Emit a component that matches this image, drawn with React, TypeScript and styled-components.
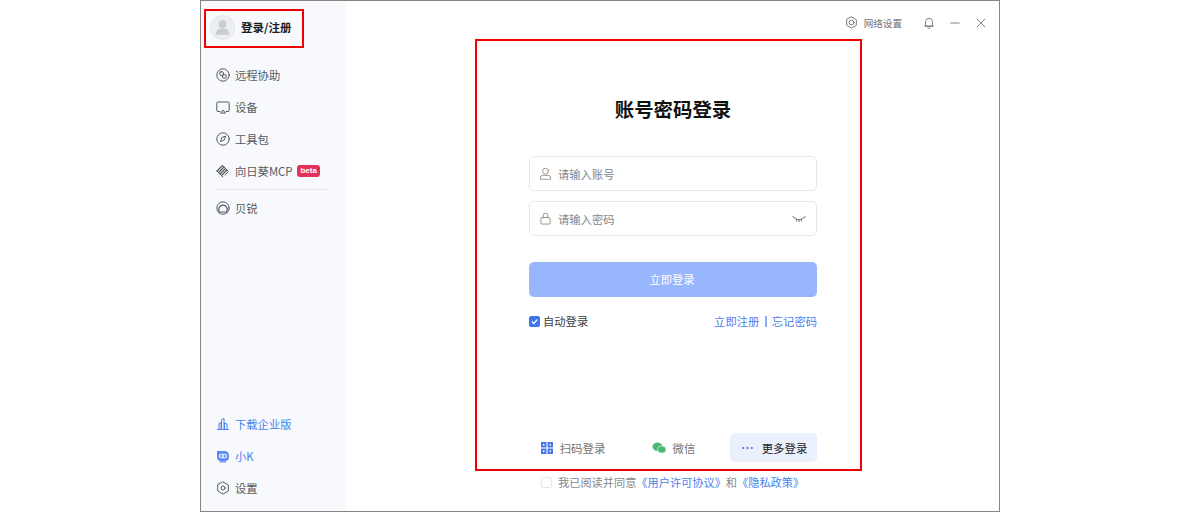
import React, { ReactNode } from 'react';
import styled, { createGlobalStyle } from 'styled-components';

const BLUE = '#3f74f0';
const LINK = '#4a7ff0';
const GREY = '#55595f';

const GlobalStyle = createGlobalStyle`
  html, body {
    margin: 0;
    padding: 0;
    background: #fff;
    font-family: "Noto Sans CJK SC", "Liberation Sans", sans-serif;
  }
`;

const Page = styled.div`
  position: relative;
  display: flex;
  justify-content: center;
  width: 1200px;
  height: 512px;
  overflow: hidden;
`;

const Window = styled.div`
  display: flex;
  box-sizing: border-box;
  width: 800px;
  height: 512px;
  border: 1px solid #858585;
  background: #fff;
`;

const Sidebar = styled.aside`
  display: flex;
  flex-direction: column;
  flex: 0 0 144px;
  background: #f7f9fc;
  padding-top: 12px;
`;

const Profile = styled.div`
  display: flex;
  align-items: center;
  gap: 6px;
  height: 28px;
  padding-left: 9px;
  margin-bottom: 18px;
  color: #1c1c1c;
  font-size: 11.5px;
  font-weight: 700;
`;

const Avatar = styled.div`
  flex: 0 0 25px;
  width: 25px;
  height: 25px;
`;

const NavList = styled.nav`
  display: flex;
  flex-direction: column;
`;

const NavItem = styled.div<{ $blue?: boolean }>`
  display: flex;
  align-items: center;
  height: 32px;
  padding-left: 15px;
  gap: 5px;
  font-size: 11.3px;
  color: ${({ $blue }) => ($blue ? LINK : GREY)};

  svg {
    flex: 0 0 14px;
  }
`;

const Badge = styled.span`
  margin-left: 0;
  padding: 0 3px;
  height: 12px;
  line-height: 12px;
  border-radius: 3px;
  background: #e0325a;
  color: #fff;
  font-family: "Liberation Sans", sans-serif;
  font-size: 8px;
  font-weight: 700;
`;

const Divider = styled.div`
  height: 1px;
  margin: 2px 17px 2px 15px;
  background: #e6e8ec;
`;

const Spacer = styled.div`
  flex: 1;
`;

const BottomNav = styled(NavList)`
  padding-bottom: 7px;
`;

const Main = styled.main`
  display: flex;
  flex-direction: column;
  align-items: center;
  flex: 1;
  min-width: 0;
  padding-left: 2px;
`;

const TopBar = styled.header`
  display: flex;
  align-items: center;
  justify-content: flex-end;
  align-self: stretch;
  height: 43px;
  padding-right: 12px;
  color: #6d7075;
  font-size: 9.6px;
`;

const NetSetting = styled.div`
  display: flex;
  align-items: center;
  gap: 6px;
  margin-right: 7px;
`;

const WinButton = styled.button`
  display: flex;
  align-items: center;
  justify-content: center;
  width: 12px;
  height: 12px;
  margin-left: 14px;
  padding: 0;
  border: 0;
  background: none;
`;

const Panel = styled.section`
  display: flex;
  flex-direction: column;
  width: 288px;
  flex: 1;
`;

const Title = styled.h1`
  margin: 51px 0 33px;
  height: 28px;
  line-height: 28px;
  text-align: center;
  color: #111;
  font-size: 19.4px;
  font-weight: 700;
`;

const Field = styled.div`
  display: flex;
  align-items: center;
  box-sizing: border-box;
  height: 35px;
  margin-bottom: 10px;
  padding: 0 10px 0 9px;
  gap: 6px;
  border: 1px solid #e8e9ed;
  border-radius: 5px;
  color: #85888d;
  font-size: 11.3px;
`;

const FieldText = styled.span`
  flex: 1;
`;

const Submit = styled.button`
  height: 35px;
  margin-top: 16px;
  padding: 0 2px 2px 0;
  border: 0;
  border-radius: 5px;
  background: #98b6fb;
  color: #fff;
  font-family: inherit;
  font-size: 11.3px;
`;

const Options = styled.div`
  display: flex;
  align-items: center;
  justify-content: space-between;
  height: 20px;
  margin-top: 14px;
  font-size: 11.3px;
`;

const AutoLogin = styled.label`
  display: flex;
  align-items: center;
  gap: 3px;
  color: #3a3c40;
`;

const CheckBox = styled.span<{ $checked?: boolean }>`
  display: flex;
  align-items: center;
  justify-content: center;
  box-sizing: border-box;
  width: 11px;
  height: 11px;
  border-radius: 2px;
  background: ${({ $checked }) => ($checked ? BLUE : '#fff')};
  border: 1px solid ${({ $checked }) => ($checked ? BLUE : '#e6e7eb')};
`;

const Links = styled.div`
  display: flex;
  align-items: center;
  color: ${LINK};
`;

const Sep = styled.span`
  width: 1.5px;
  height: 11px;
  margin: 0 5px 0 6px;
  background: #8aaaf5;
`;

const Methods = styled.div`
  display: flex;
  align-items: center;
  height: 29px;
  margin-top: auto;
  font-size: 11.4px;
  color: #6f7276;
`;

const Method = styled.div<{ $active?: boolean; $width: number }>`
  display: flex;
  align-items: center;
  justify-content: center;
  gap: ${({ $active }) => ($active ? 9 : 7)}px;
  box-sizing: border-box;
  width: ${({ $width }) => $width}px;
  height: 29px;
  padding-left: ${({ $active }) => ($active ? 2 : 0)}px;
  border-radius: 5px;
  background: ${({ $active }) => ($active ? '#ebf0fd' : 'transparent')};
  color: ${({ $active }) => ($active ? '#222' : 'inherit')};
`;

const Agreement = styled.div`
  display: flex;
  align-items: center;
  gap: 6px;
  height: 22px;
  margin: 9px 0 18px;
  padding-left: 12px;
  color: #85888d;
  font-size: 11.2px;
  white-space: nowrap;
`;

const AgreementLink = styled.span`
  color: ${LINK};
`;

const Highlight = styled.div<{ $x: number; $y: number; $w: number; $h: number }>`
  position: absolute;
  box-sizing: border-box;
  left: ${({ $x }) => $x}px;
  top: ${({ $y }) => $y}px;
  width: ${({ $w }) => $w}px;
  height: ${({ $h }) => $h}px;
  border: 2px solid #f00000;
  pointer-events: none;
`;

const Icon = ({ children, size = 14, color = 'currentColor', box = 14 }: { children: ReactNode; size?: number; color?: string; box?: number }) => (
  <svg width={size} height={size} viewBox={`0 0 ${box} ${box}`} fill="none" stroke={color} strokeWidth="1" strokeLinecap="round" strokeLinejoin="round">
    {children}
  </svg>
);

const navTop = [
  {
    label: '远程协助',
    icon: (
      <>
        <circle cx="7" cy="7" r="6.2" />
        <rect x="3.800" y="3.800" width="3.600" height="3.600" rx="1" />
        <rect x="6.600" y="6.600" width="3.600" height="3.600" rx="1" />
      </>
    ),
  },
  {
    label: '设备',
    icon: (
      <>
        <path d="M3.800 11.500H2a1.200 1.200 0 0 1-1.200-1.200V3.200A1.200 1.200 0 0 1 2 2h10a1.200 1.200 0 0 1 1.200 1.200v7.100a1.200 1.200 0 0 1-1.200 1.200h-1.800" />
        <path d="M4.800 12.800 7 10l2.200 2.800z" />
      </>
    ),
  },
  {
    label: '工具包',
    icon: (
      <>
        <circle cx="7" cy="7" r="6.2" />
        <path d="M9.600 4.400 8.200 8.200 4.400 9.600l1.400-3.800z" />
      </>
    ),
  },
];

export default function App() {
  return (
    <Page>
      <GlobalStyle />
      <Window>
        <Sidebar>
          <Profile>
            <Avatar>
              <svg width="25" height="25" viewBox="0 0 26 26">
                <circle cx="13" cy="13" r="12.500" fill="#eceef1" stroke="#e3e5e9" />
                <circle cx="13" cy="9.500" r="4" fill="#c9ccd2" />
                <path d="M6 19.500c0-4 3-5.500 7-5.500s7 1.500 7 5.500c0 .8-.6 1-1.200 1H7.200C6.600 20.500 6 20.300 6 19.500z" fill="#c9ccd2" />
              </svg>
            </Avatar>
            登录/注册
          </Profile>
          <NavList>
            {navTop.map((item) => (
              <NavItem key={item.label}>
                <Icon>{item.icon}</Icon>
                {item.label}
              </NavItem>
            ))}
            <NavItem>
              <Icon>
                <path d="M1 7 6.500 1.500M2.500 8.500 8 3M4 10l5.500-5.500M5.500 11.500 11 6" strokeWidth="1.200" />
                <path d="M6.500 1.500 12.500 7.500 9 11M1 7l6 6" />
              </Icon>
              向日葵MCP
              <Badge>beta</Badge>
            </NavItem>
            <Divider />
            <NavItem>
              <Icon>
                <circle cx="7" cy="7" r="6.200" />
                <path d="M3.200 10.500a4.300 4.300 0 1 1 7.600 0" strokeWidth="1.300" />
                <path d="M3 11.500c1.500-.9 6.500-.9 8 0" />
              </Icon>
              贝锐
            </NavItem>
          </NavList>
          <Spacer />
          <BottomNav>
            <NavItem $blue>
              <Icon>
                <path d="M1.500 12.500h11M3 12.500V6.500l2-.8v6.800M5.500 12.500V2.500L8 1.500v11M8.500 12.500V6l2.500 1v5.500" />
              </Icon>
              下载企业版
            </NavItem>
            <NavItem $blue>
              <svg width="14" height="14" viewBox="0 0 14 14">
                <path d="M1.500 2h7A4.500 4.500 0 0 1 13 6.500v1.500A4 4 0 0 1 9 12H5a4 4 0 0 1-4-4V2.500a.5.5 0 0 1 .5-.5z" fill="#5b8bf3" />
                <rect x="2.800" y="4.800" width="8.400" height="4.400" rx="2.200" fill="#dfe9fe" />
                <circle cx="5.300" cy="7" r=".9" fill="#3f74f0" />
                <circle cx="8.700" cy="7" r=".9" fill="#3f74f0" />
                <path d="M4 12.800h5.500" stroke="#5b8bf3" strokeWidth="1.200" strokeLinecap="round" />
              </svg>
              小K
            </NavItem>
            <NavItem>
              <Icon>
                <path d="M7 .9 12.300 4v6L7 13.100 1.700 10V4z" />
                <circle cx="7" cy="7" r="2" />
              </Icon>
              设置
            </NavItem>
          </BottomNav>
        </Sidebar>
        <Main>
          <TopBar>
            <NetSetting>
              <Icon size={13} color="#6d7075">
                <path d="M7 1 12.200 4v6L7 13 1.800 10V4z" />
                <circle cx="7" cy="7" r="2.600" />
              </Icon>
              网络设置
            </NetSetting>
            <WinButton>
              <Icon size={12} color="#6d7075">
                <path d="M3 10.500V5.500a4 4 0 0 1 8 0v5zM1.800 10.500h10.400M5.800 13h2.400" />
              </Icon>
            </WinButton>
            <WinButton>
              <Icon size={12} color="#6d7075"><path d="M2 7h10" /></Icon>
            </WinButton>
            <WinButton>
              <Icon size={12} color="#6d7075"><path d="m2.500 2.500 9 9M11.500 2.500l-9 9" /></Icon>
            </WinButton>
          </TopBar>
          <Panel>
            <Title>账号密码登录</Title>
            <Field>
              <Icon size={13} color="#9a8f85">
                <circle cx="7" cy="4.500" r="3.200" />
                <path d="M1.500 12.800v-1.300a2.500 2.500 0 0 1 2.500-2.500h6a2.500 2.500 0 0 1 2.500 2.500v1.300z" />
              </Icon>
              <FieldText>请输入账号</FieldText>
            </Field>
            <Field>
              <Icon size={13} color="#9a8f85">
                <rect x="2" y="6" width="10" height="7" rx="1" />
                <path d="M4.500 6V3.800a2.500 2.500 0 0 1 5 0V6" />
              </Icon>
              <FieldText>请输入密码</FieldText>
              <Icon size={14} color="#6d7075">
                <path d="M1.800 5.200C4 8.600 10 8.600 12.200 5.200M.8 4.500l1.500 1.500M13.200 4.500 11.700 6M4.300 9l.7-1.800M9.700 9 9 7.200M7 9.700V8" />
              </Icon>
            </Field>
            <Submit>立即登录</Submit>
            <Options>
              <AutoLogin>
                <CheckBox $checked>
                  <svg width="9" height="9" viewBox="0 0 9 9" fill="none" stroke="#fff" strokeWidth="1.200">
                    <path d="m1.800 4.500 2 2 3.500-4" />
                  </svg>
                </CheckBox>
                自动登录
              </AutoLogin>
              <Links>
                立即注册
                <Sep />
                忘记密码
              </Links>
            </Options>
            <Methods>
              <Method $width={88}>
                <svg width="12" height="12" viewBox="0 0 12 12" fill="#4a78ee">
                  <path d="M0 0h5.500v5.500H0zM2 2v1.500h1.500V2zM6.500 0H12v5.500H6.500zM8.500 2v1.500H10V2zM0 6.500h5.500V12H0zM2 8.500V10h1.500V8.500zM6.500 6.500H12V12H6.500zM8.500 8.500V10H10V8.500z" fillRule="evenodd" />
                </svg>
                扫码登录
              </Method>
              <Method $width={113}>
                <svg width="14" height="12" viewBox="0 0 14 12" fill="#4bb774">
                  <ellipse cx="5.500" cy="4.800" rx="5" ry="4.200" />
                  <ellipse cx="9.800" cy="7.500" rx="4.200" ry="3.500" stroke="#fff" strokeWidth=".6" />
                </svg>
                微信
              </Method>
              <Method $active $width={87}>
                <svg width="11" height="4" viewBox="0 0 11 4" fill="#3f6fe8">
                  <circle cx="1.200" cy="2" r="1.100" />
                  <circle cx="5.500" cy="2" r="1.100" />
                  <circle cx="9.800" cy="2" r="1.100" />
                </svg>
                更多登录
              </Method>
            </Methods>
            <Agreement>
              <CheckBox />
              <span>
                我已阅读并同意<AgreementLink>《用户许可协议》</AgreementLink>和<AgreementLink>《隐私政策》</AgreementLink>
              </span>
            </Agreement>
          </Panel>
        </Main>
      </Window>
      <Highlight $x={204} $y={9} $w={100} $h={39} />
      <Highlight $x={475} $y={39} $w={387} $h={432} />
    </Page>
  );
}
